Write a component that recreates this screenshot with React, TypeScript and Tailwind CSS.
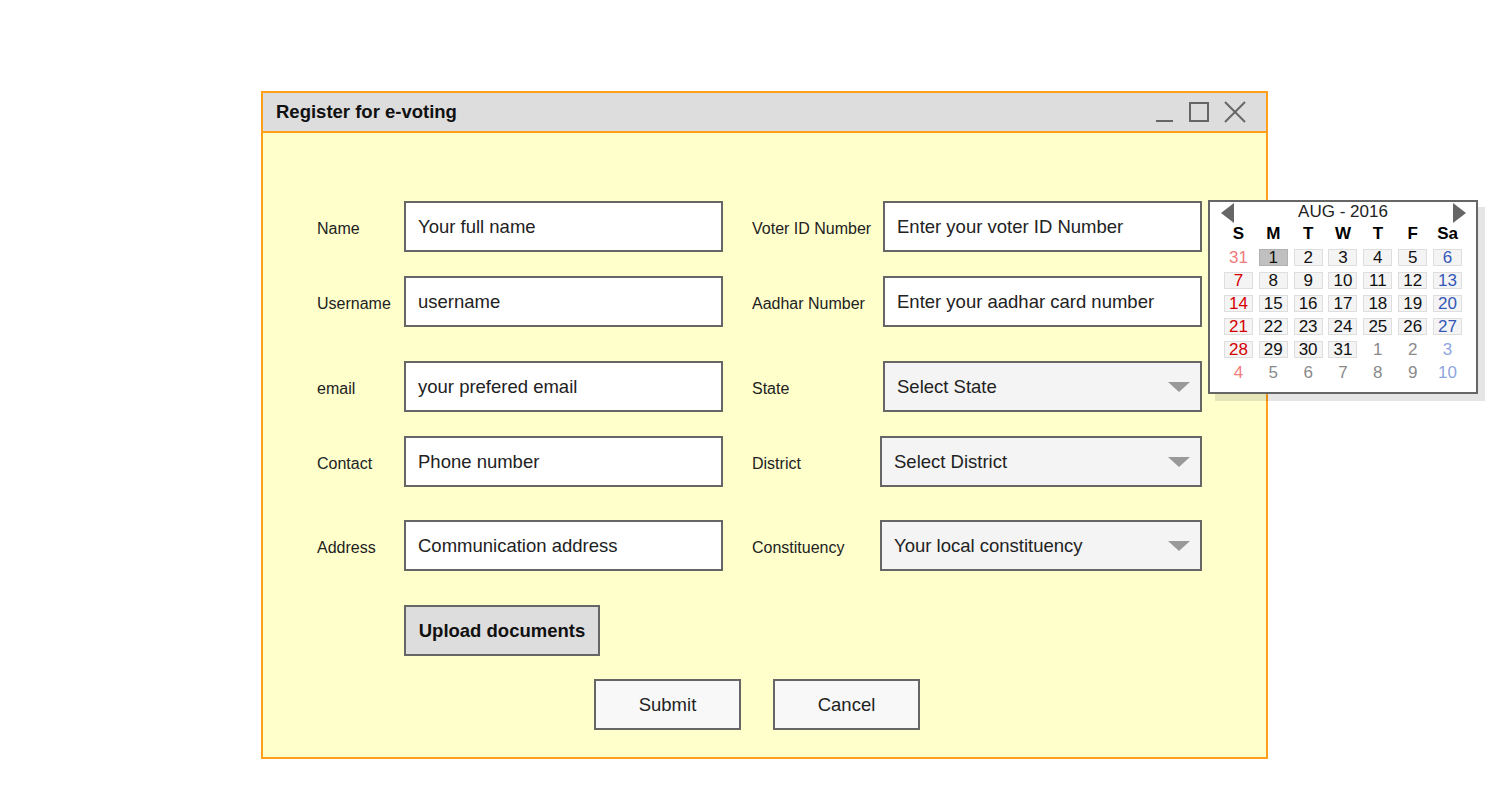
import React from "react";

type Cell = { d: number; out?: boolean; sel?: boolean };

const weeks: Cell[][] = [
  [{ d: 31, out: true }, { d: 1, sel: true }, { d: 2 }, { d: 3 }, { d: 4 }, { d: 5 }, { d: 6 }],
  [{ d: 7 }, { d: 8 }, { d: 9 }, { d: 10 }, { d: 11 }, { d: 12 }, { d: 13 }],
  [{ d: 14 }, { d: 15 }, { d: 16 }, { d: 17 }, { d: 18 }, { d: 19 }, { d: 20 }],
  [{ d: 21 }, { d: 22 }, { d: 23 }, { d: 24 }, { d: 25 }, { d: 26 }, { d: 27 }],
  [{ d: 28 }, { d: 29 }, { d: 30 }, { d: 31 }, { d: 1, out: true }, { d: 2, out: true }, { d: 3, out: true }],
  [4, 5, 6, 7, 8, 9, 10].map((d) => ({ d, out: true })),
];

function cellColor(col: number, out?: boolean) {
  if (col === 0) return out ? "text-[#ef7b7b]" : "text-[#d40000]";
  if (col === 6) return out ? "text-[#8ea6e0]" : "text-[#3558b8]";
  return out ? "text-[#8a8a8a]" : "text-[#111]";
}

function Input({ text, wide }: { text: string; wide?: boolean }) {
  return (
    <div
      className={
        (wide ? "w-[322px] " : "w-[319px] ") +
        "h-[51px] border-2 border-[#666] bg-white flex items-center pl-[12px] text-[18.5px] text-[#222]"
      }
    >
      {text}
    </div>
  );
}

function Select({ text, wide }: { text: string; wide?: boolean }) {
  return (
    <div
      className={
        (wide ? "w-[322px] " : "w-[319px] ") +
        "h-[51px] border-2 border-[#666] bg-[#f4f4f4] flex items-center justify-between pl-[12px] pr-[10px] text-[18.5px] text-[#222]"
      }
    >
      <span>{text}</span>
      <svg width="22" height="10" viewBox="0 0 22 10">
        <polygon points="0,0 22,0 11,10" fill="#999" />
      </svg>
    </div>
  );
}

function Label({ text, w }: { text: string; w: string }) {
  return <div className={w + " text-[16px] text-[#222] pt-[4px] whitespace-nowrap"}>{text}</div>;
}

export default function App() {
  return (
    <div className="relative w-[1500px] h-[800px] bg-white font-['Liberation_Sans',Arial,sans-serif]">
      <div className="pt-[91px] pl-[261px]">
        <div className="w-[1007px] h-[668px] border-2 border-[#ff9f1a] bg-[#ffffcc] flex flex-col">
          {/* Title bar */}
          <div className="h-[40px] bg-[#dddddd] border-b-2 border-[#ff9f1a] flex items-center justify-between pl-[13px] pr-[16px]">
            <span className="text-[18.5px] font-bold text-[#111]">Register for e-voting</span>
            <svg width="100" height="38" viewBox="0 0 100 38">
              <line x1="6" y1="28" x2="23" y2="28" stroke="#666" strokeWidth="2" />
              <rect x="40" y="10" width="18" height="18" fill="none" stroke="#666" strokeWidth="2" />
              <line x1="75" y1="9" x2="95" y2="29" stroke="#666" strokeWidth="2" />
              <line x1="95" y1="9" x2="75" y2="29" stroke="#666" strokeWidth="2" />
            </svg>
          </div>

          {/* Body */}
          <div className="flex flex-col pl-[54px] pt-[68px]">
            <div className="flex items-center">
              <Label text="Name" w="w-[87px]" />
              <Input text="Your full name" />
              <div className="w-[29px]" />
              <Label text="Voter ID Number" w="w-[131px]" />
              <Input text="Enter your voter ID Number" />
            </div>
            <div className="flex items-center mt-[24px]">
              <Label text="Username" w="w-[87px]" />
              <Input text="username" />
              <div className="w-[29px]" />
              <Label text="Aadhar Number" w="w-[131px]" />
              <Input text="Enter your aadhar card number" />
            </div>
            <div className="flex items-center mt-[34px]">
              <Label text="email" w="w-[87px]" />
              <Input text="your prefered email" />
              <div className="w-[29px]" />
              <Label text="State" w="w-[131px]" />
              <Select text="Select State" />
            </div>
            <div className="flex items-center mt-[24px]">
              <Label text="Contact" w="w-[87px]" />
              <Input text="Phone number" />
              <div className="w-[29px]" />
              <Label text="District" w="w-[128px]" />
              <Select text="Select District" wide />
            </div>
            <div className="flex items-center mt-[33px]">
              <Label text="Address" w="w-[87px]" />
              <Input text="Communication address" />
              <div className="w-[29px]" />
              <Label text="Constituency" w="w-[128px]" />
              <Select text="Your local constituency" wide />
            </div>
            <div className="flex mt-[34px] pl-[87px]">
              <div className="w-[196px] h-[51px] border-2 border-[#666] bg-[#dddddd] flex items-center justify-center text-[18.5px] font-bold text-[#111]">
                Upload documents
              </div>
            </div>
            <div className="flex mt-[23px] pl-[277px] gap-[32px]">
              <div className="w-[147px] h-[51px] border-2 border-[#666] bg-[#f8f8f8] flex items-center justify-center text-[18.5px] text-[#222]">
                Submit
              </div>
              <div className="w-[147px] h-[51px] border-2 border-[#666] bg-[#f8f8f8] flex items-center justify-center text-[18.5px] text-[#222]">
                Cancel
              </div>
            </div>
          </div>
        </div>
      </div>

      {/* Calendar popup */}
      <div className="absolute left-[1208px] top-[200px] w-[270px] h-[194px] border-2 border-[#666] bg-white shadow-[7px_7px_0_rgba(0,0,0,0.1)]">
        <div className="relative h-[20px] flex items-center justify-center text-[17px] text-[#222]">
          AUG - 2016
          <svg className="absolute left-[11px] top-[1px]" width="13" height="20" viewBox="0 0 13 20">
            <polygon points="13,0 13,20 0,10" fill="#666" />
          </svg>
          <svg className="absolute right-[10px] top-[1px]" width="13" height="20" viewBox="0 0 13 20">
            <polygon points="0,0 0,20 13,10" fill="#666" />
          </svg>
        </div>
        <div className="grid grid-cols-7 px-[11px]">
          {["S", "M", "T", "W", "T", "F", "Sa"].map((h, i) => (
            <div key={i} className="h-[24px] flex items-center justify-center text-[17px] font-bold text-black">
              {h}
            </div>
          ))}
          {weeks.map((w, r) =>
            w.map((c, i) => (
              <div key={r + "-" + i} className="h-[23px] flex items-center justify-center">
                <span
                  className={
                    "w-[29px] h-[17px] flex items-center justify-center text-[17px] " +
                    cellColor(i, c.out) +
                    (c.out
                      ? ""
                      : c.sel
                      ? " bg-[#c0c0c0] border border-[#b0b0b0]"
                      : " bg-[#f4f4f4] border border-[#dedede]")
                  }
                >
                  {c.d}
                </span>
              </div>
            ))
          )}
        </div>
      </div>
    </div>
  );
}
